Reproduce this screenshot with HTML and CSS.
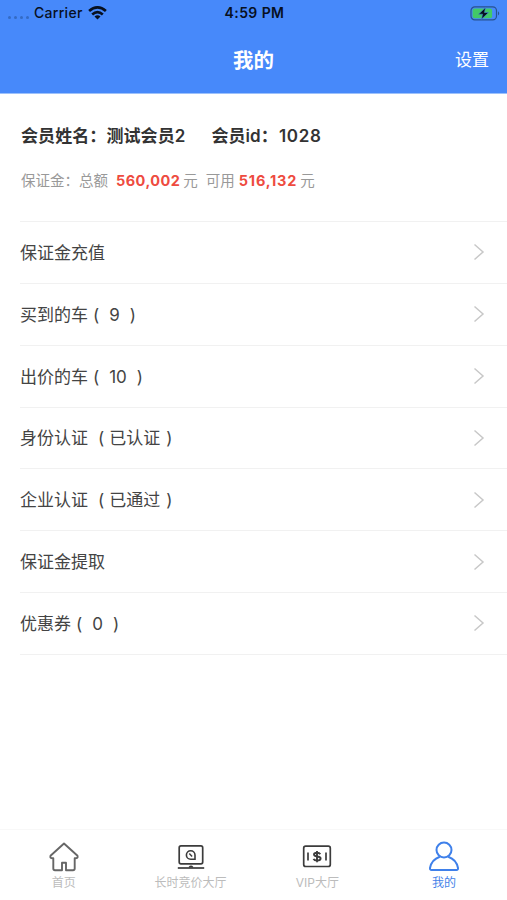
FILE: index.html
```
<!DOCTYPE html>
<html lang="zh-CN">
<head>
  <meta charset="UTF-8" />
  <meta name="viewport" content="width=device-width, initial-scale=1.0" />
  <title>我的</title>
  <link rel="stylesheet" href="styles.css">
</head>
<body>
  <svg class="defs" width="0" height="0">
    <symbol id="arrow" viewBox="0 0 12 18">
      <path d="M1.500 1.500L10 9l-8.500 7.500" fill="none" stroke="currentColor" stroke-width="1.500"/>
    </symbol>
  </svg>

  <header>
    <div class="status">
      <div class="carrier">
        <span class="signal"><i></i><i></i><i></i><i></i></span>
        <span>Carrier</span>
        <svg class="wifi" width="19" height="14" viewBox="0 0 19 14">
          <g fill="none" stroke="#07101f" stroke-width="2.700">
            <path d="M1.100 5.100Q9.500-2.300 17.900 5.100"/>
            <path d="M4.200 8.400Q9.500 3.800 14.800 8.400"/>
          </g>
          <path d="M6.500 10.500Q9.500 8.200 12.500 10.500L9.500 13.600z" fill="#07101f"/>
        </svg>
      </div>
      <span class="time">4:59 PM</span>
      <svg class="battery" width="31" height="15" viewBox="0 0 31 15">
        <rect x="1" y=".9" width="25.500" height="13" rx="3.800" fill="none" stroke="#28528f" stroke-width="1.200"/>
        <rect x="2.600" y="2.500" width="19.500" height="9.800" rx="2" fill="#42c967"/>
        <path d="M28 5.200q2.400 2.200 0 4.400z" fill="#28528f"/>
        <path d="M15.500 1.500L8.500 8.200h4L11.500 13.200 18.600 6.500h-4.100z" fill="#07101f" stroke="#438bd8" stroke-width=".6"/>
      </svg>
    </div>
    <div class="navbar">
      <h1>我的</h1>
      <a class="setting">设置</a>
    </div>
  </header>

  <section class="member">
    <div class="name"><span>会员姓名：测试会员2</span><span>会员id：<b>1028</b></span></div>
    <div class="deposit">
      <span class="total">保证金：总额</span><b>560,002</b><span class="unit">元</span>
      <span class="usable">可用</span><b class="rest">516,132</b><span class="unit">元</span>
    </div>
  </section>

  <ul class="menu">
    <li><span>保证金充值</span><svg><use href="#arrow"/></svg></li>
    <li><span>买到的车<span class="count"><i>(</i>9<i>)</i></span></span><svg><use href="#arrow"/></svg></li>
    <li><span>出价的车<span class="count"><i>(</i>10<i>)</i></span></span><svg><use href="#arrow"/></svg></li>
    <li><span>身份认证<span class="state"><i>(</i>已认证<i>)</i></span></span><svg><use href="#arrow"/></svg></li>
    <li><span>企业认证<span class="state"><i>(</i>已通过<i>)</i></span></span><svg><use href="#arrow"/></svg></li>
    <li><span>保证金提取</span><svg><use href="#arrow"/></svg></li>
    <li><span>优惠券<span class="count"><i>(</i>0<i>)</i></span></span><svg><use href="#arrow"/></svg></li>
  </ul>

  <nav class="tabs">
    <a>
      <svg width="32" height="32" viewBox="0 0 32 32">
        <path d="M16 2.500L2.500 14.800q-1 2.700 2.800 2.400v10.300q0 1.700 1.700 1.700h7v-7.500h4v7.500h7q1.700 0 1.700-1.700V17.200q3.800.3 2.800-2.400z" fill="none" stroke="#666" stroke-width="1.900" stroke-linejoin="round"/>
      </svg>
      <span>首页</span>
    </a>
    <a>
      <svg width="32" height="32" viewBox="0 0 32 32" fill="none" stroke="#3c3c3c">
        <rect x="4.200" y="4.900" width="23.500" height="18" rx="1.800" stroke-width="1.700"/>
        <path d="M2.800 27h26.400" stroke-width="1.700"/>
        <path d="M14.200 26.500q1.800-2.200 3.600 0" stroke-width="1.600"/>
        <path d="M20 18.300h-4.300a4.300 4.300 0 1 1 4.300-4.300z" stroke-width="1.600"/>
        <path d="M14.300 12.500l2.800 3" stroke-width="1.500"/>
      </svg>
      <span>长时竞价大厅</span>
    </a>
    <a>
      <svg width="32" height="32" viewBox="0 0 32 32" fill="none" stroke="#3c3c3c">
        <rect x="2.700" y="5.200" width="26.600" height="20.300" rx="2" stroke-width="1.700"/>
        <path d="M7 11.500v8M25 11.500v8" stroke-width="1.700"/>
        <path d="M19.300 13.200q-.8-1.500-3.300-1.500-3 0-3 1.900 0 1.600 3.200 1.900 3.400.3 3.400 2.100 0 2-3.500 2-2.800 0-3.600-1.700M16 10v11.300" stroke-width="1.900"/>
      </svg>
      <span>VIP大厅</span>
    </a>
    <a class="active">
      <svg width="32" height="32" viewBox="0 0 32 32" fill="none" stroke="#3f80ea" stroke-width="2">
        <circle cx="16" cy="9" r="7.500"/>
        <path d="M11.800 15.700C6.500 17.500 3 21.500 2 27q-.2 2 1.500 2h25q1.700 0 1.500-2C29 21.500 25.500 17.500 20.200 15.700"/>
      </svg>
      <span>我的</span>
    </a>
  </nav>
</body>
</html>
```

FILE: styles.css
```
* {
  box-sizing: border-box;
}
body {
  margin: 0;
  height: 900px;
  display: flex;
  flex-direction: column;
  background: #fff;
  color: #444;
  font-family: Inter, "Noto Sans CJK SC", sans-serif;
  overflow: hidden;
}
i {
  font-style: normal;
}
.defs {
  position: absolute;
}
header {
  height: 94px;
  background: #4789fa;
  border-bottom: 1px solid #9dc1fb;
}
.status {
  height: 26px;
  display: grid;
  grid-template-columns: 1fr auto 1fr;
  align-items: center;
  padding: 0 6px 0 8px;
  color: #07101f;
  font-size: 14px;
  line-height: 16px;
  font-weight: 500;
}
.carrier {
  display: flex;
  align-items: center;
  letter-spacing: .3px;
}
.signal {
  display: flex;
  gap: 3px;
  margin: 8px 5px 0 0;
}
.signal i {
  width: 3px;
  height: 3px;
  border-radius: 50%;
  background: #346bc4;
}
.wifi {
  margin-left: 5px;
}
.time {
  font-weight: 600;
  letter-spacing: .4px;
}
.battery {
  justify-self: end;
}
.navbar {
  height: 65px;
  display: grid;
  grid-template-columns: 1fr auto 1fr;
  align-items: center;
  padding: 0 18px;
  color: #fff;
}
.navbar h1 {
  grid-column: 2;
  margin: 0;
  font-size: 20.500px;
  font-weight: 700;
}
.setting {
  justify-self: end;
  font-size: 17px;
}
.member {
  height: 127px;
  padding: 29px 21px 0;
}
.name {
  display: flex;
  gap: 26px;
  height: 26px;
  line-height: 26px;
  font-size: 17px;
  font-weight: 600;
  color: #333;
}
.name span {
  letter-spacing: .08px;
}
.name b {
  font-weight: 600;
  letter-spacing: .7px;
  margin-left: 1px;
}
.deposit {
  display: flex;
  height: 22px;
  margin-top: 21px;
  line-height: 22px;
  font-size: 14.500px;
  color: #999;
}
.deposit b {
  color: #ee4b40;
  font-weight: 700;
  letter-spacing: .45px;
}
.deposit .rest {
  letter-spacing: .8px;
}
.total {
  margin-right: 8px;
}
.unit {
  margin-left: 3px;
}
.usable {
  margin: 0 4px 0 8px;
}
.menu {
  flex: 1;
  list-style: none;
  margin: 0 0 0 20px;
  padding: 0;
}
.menu li {
  height: 61.850px;
  display: flex;
  align-items: center;
  justify-content: space-between;
  padding-right: 22px;
  border-top: 1px solid #f1f1f1;
  font-size: 17px;
}
.menu li > span {
  padding-bottom: 2px;
}
.menu li:last-child {
  height: 62.850px;
  border-bottom: 1px solid #f1f1f1;
}
.menu svg {
  width: 12px;
  height: 18px;
  color: #c8c8c8;
}
.count i:first-child {
  margin: 0 10px 0 5px;
}
.count i:last-child {
  margin-left: 10px;
}
.state i:first-child {
  margin: 0 5px 0 10px;
}
.state i:last-child {
  margin-left: 6px;
}
.tabs {
  height: 71px;
  display: grid;
  grid-template-columns: repeat(4, 1fr);
  border-top: 1px solid #f8f8f8;
}
.tabs a {
  display: flex;
  flex-direction: column;
  align-items: center;
  padding: 11px 0 0 1px;
  font-size: 12px;
  line-height: 18px;
  color: #bcbcbc;
}
.tabs span {
  margin-top: 1px;
}
.tabs .active {
  color: #4582e8;
}
```
